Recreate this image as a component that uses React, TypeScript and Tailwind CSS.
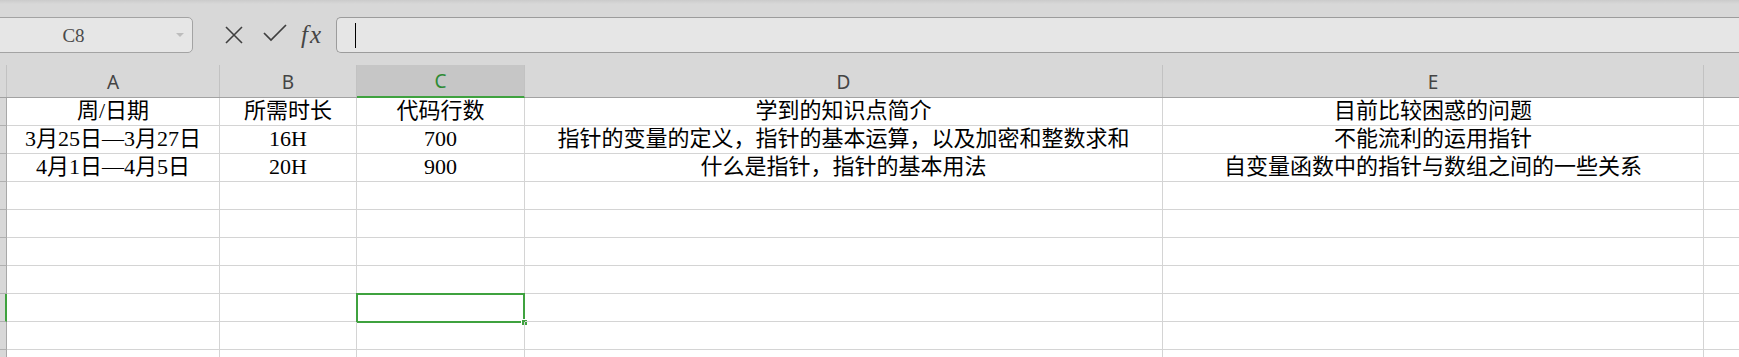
import React from "react";

const cols = [
  { key: "A", w: "w-[213px]" },
  { key: "B", w: "w-[137px]" },
  { key: "C", w: "w-[168px]" },
  { key: "D", w: "w-[638px]" },
  { key: "E", w: "w-[541px]" },
];

const rows: string[][] = [
  ["周/日期", "所需时长", "代码行数", "学到的知识点简介", "目前比较困惑的问题"],
  ["3月25日—3月27日", "16H", "700", "指针的变量的定义，指针的基本运算，以及加密和整数求和", "不能流利的运用指针"],
  ["4月1日—4月5日", "20H", "900", "什么是指针，指针的基本用法", "自变量函数中的指针与数组之间的一些关系"],
  [], [], [], [], [], [], [],
];

const cellFont = { fontFamily: '"Liberation Serif", "Noto Sans CJK SC", serif' };

function Toolbar() {
  return (
    <div className="h-[65px] bg-[#d8d8d8] flex flex-col">
      <div className="h-[4px] bg-gradient-to-b from-[#cbcbcb] to-[#d8d8d8]" />
      <div className="flex items-start mt-[13px]">
        <div className="-ml-[10px] w-[203px] h-[36px] flex items-center border border-[#a3a3a3] rounded-[5px] bg-[#e6e6e6]">
          <div
            className="w-[165px] text-center text-[19px] text-[#4a4a4a] leading-none"
            style={{ fontFamily: '"Liberation Serif", serif' }}
          >
            C8
          </div>
          <svg width="8" height="5" viewBox="0 0 8 5" className="ml-[20px]">
            <path d="M0 0 L8 0 L4 4 Z" fill="#bdbdbd" />
          </svg>
        </div>
        <div className="w-[143px] flex items-center h-[36px] pl-[31px]">
          <svg width="20" height="20" viewBox="0 0 20 20">
            <path d="M2 2 L18 18 M18 2 L2 18" stroke="#3f3f3f" strokeWidth="1.6" fill="none" />
          </svg>
          <svg width="26" height="20" viewBox="0 0 26 20" className="ml-[18px] -mt-[4px]">
            <path d="M2 10 L9 17 L24 2" stroke="#3f3f3f" strokeWidth="1.7" fill="none" />
          </svg>
          <span
            className="ml-[13px] italic text-[25px] tracking-[2px] text-[#454545] leading-none -mt-[2px]"
            style={{ fontFamily: '"Liberation Serif", serif' }}
          >
            fx
          </span>
        </div>
        <div className="flex-1 h-[36px] border border-r-0 border-[#9c9c9c] rounded-l-[5px] bg-[#e6e6e6] flex items-center">
          <div className="ml-[18px] w-px h-[25px] bg-black" />
        </div>
      </div>
    </div>
  );
}

function HeaderRow() {
  return (
    <div className="flex h-[33px] border-b border-[#a2a2a2] bg-[#d8d8d8]">
      <div className="w-[7px] border-r border-[#c2c2c2]" />
      {cols.map((c) => (
        <div
          key={c.key}
          className={`${c.w} flex items-center justify-center border-r border-[#c2c2c2] text-[19px] ${
            c.key === "C" ? "bg-[#c6c6c6] text-[#2e8b34] border-b-2 border-b-[#3fa23f] -mb-px" : "text-[#444]"
          }`}
          style={{ fontFamily: '"Noto Sans", sans-serif' }}
        >
          <span className="mt-[2px]">{c.key}</span>
        </div>
      ))}
      <div className="flex-1" />
    </div>
  );
}

function Grid() {
  return (
    <div>
      {rows.map((r, i) => (
        <div key={i} className="flex h-[28px]">
          <div
            className={`w-[7px] bg-[#d8d8d8] border-b border-[#b0b0b0] ${
              i === 7 ? "border-r-2 border-r-[#3fa23f]" : "border-r border-r-[#a8a8a8]"
            }`}
          />
          {cols.map((c, j) => (
            <div
              key={c.key}
              className={`${c.w} relative border-r border-b border-[#d4d4d4] flex items-end justify-center whitespace-nowrap text-[22px] leading-none text-black pb-[3px]`}
              style={cellFont}
            >
              {r[j] ?? ""}
              {i === 7 && j === 2 && (
                <div className="absolute -left-px -top-px w-[169px] h-[30px] border-2 border-[#3fa23f]">
                  <div className="absolute left-[163px] top-[24px] w-[7px] h-[7px] bg-[#3fa23f] border border-white" />
                </div>
              )}
            </div>
          ))}
          <div className="flex-1 border-b border-[#d4d4d4]" />
        </div>
      ))}
    </div>
  );
}

export default function App() {
  return (
    <div className="w-[1739px] h-[357px] overflow-hidden bg-white">
      <Toolbar />
      <HeaderRow />
      <Grid />
    </div>
  );
}
